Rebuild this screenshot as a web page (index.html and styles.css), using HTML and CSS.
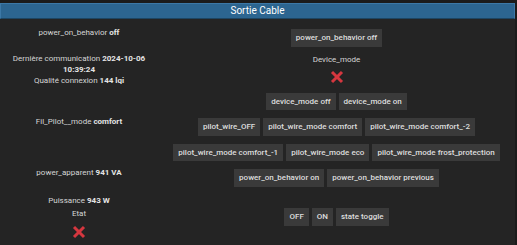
FILE: index.html
```html
<!DOCTYPE html>
<html lang="fr">
<head>
  <meta charset="UTF-8" />
  <title>Sortie Cable</title>
  <link rel="stylesheet" href="styles.css">
</head>
<body>
  <div class="panel">
    <div class="title">Sortie Cable</div>

    <div class="rows">
      <!-- power on behavior -->
      <div class="state offset">power_on_behavior <b>off</b></div>
      <div class="actions">
        <div class="btn-row">
          <button>power_on_behavior off</button>
        </div>
      </div>

      <!-- device mode -->
      <div class="state">
        <div>Dernière communication <b>2024-10-06</b></div>
        <div><b>10:39:24</b></div>
        <div>Qualité connexion <b>144 lqi</b></div>
      </div>
      <div class="actions device">
        <div class="label">Device_mode</div>
        <div class="icon-box">
          <svg class="cross" viewBox="0 0 14 14" aria-hidden="true">
            <line x1="2" y1="2" x2="12" y2="12" />
            <line x1="12" y1="2" x2="2" y2="12" />
          </svg>
        </div>
      </div>

      <!-- pilot wire -->
      <div class="state offset">Fil_Pilot__mode <b>comfort</b></div>
      <div class="actions">
        <div class="btn-row">
          <button>device_mode off</button>
          <button>device_mode on</button>
        </div>
        <div class="btn-row">
          <button>pilot_wire_OFF</button>
          <button>pilot_wire_mode comfort</button>
          <button>pilot_wire_mode comfort_-2</button>
        </div>
        <div class="btn-row">
          <button>pilot_wire_mode comfort_-1</button>
          <button>pilot_wire_mode eco</button>
          <button>pilot_wire_mode frost_protection</button>
        </div>
      </div>

      <!-- power -->
      <div class="state offset">power_apparent <b>941 VA</b></div>
      <div class="actions">
        <div class="btn-row">
          <button>power_on_behavior on</button>
          <button>power_on_behavior previous</button>
        </div>
      </div>

      <!-- state -->
      <div class="state last">
        <div>Puissance <b>943 W</b></div>
        <div class="sub">Etat</div>
        <div class="icon-box low">
          <svg class="cross" viewBox="0 0 14 14" aria-hidden="true">
            <line x1="2" y1="2" x2="12" y2="12" />
            <line x1="12" y1="2" x2="2" y2="12" />
          </svg>
        </div>
      </div>
      <div class="actions">
        <div class="btn-row">
          <button>OFF</button>
          <button>ON</button>
          <button>state toggle</button>
        </div>
      </div>
    </div>
  </div>
</body>
</html>
```

FILE: styles.css
```css
* {
  margin: 0;
  padding: 0;
  box-sizing: border-box;
}
body {
  background: #1b1b1b;
  font-family: Roboto, "Liberation Sans", sans-serif;
  font-size: 8px;
  line-height: 11px;
  color: #d6d6d6;
}
b {
  font-weight: 700;
  color: #e4e4e4;
}

.panel {
  width: 515px;
  height: 242px;
  margin-top: 3px;
  background: #242424;
}
.title {
  height: 16px;
  background: #2c6590;
  border: 1px solid #3c78a6;
  border-bottom-color: #1d4562;
  color: #fff;
  font-size: 10px;
  line-height: 14px;
  text-align: center;
}

/* state / actions table */
.rows {
  display: grid;
  grid-template-columns: 158px 1fr;
  padding-top: 6px;
}
.state {
  align-self: center;
  text-align: center;
  padding: 0 8px;
}
.state.offset {
  padding-bottom: 11px;
}
.state.last {
  padding-top: 4px;
}
.state .sub {
  margin-top: 2px;
}
.actions {
  align-self: center;
  display: flex;
  flex-direction: column;
  align-items: center;
}
.device {
  padding-top: 3px;
  text-align: center;
}
.btn-row {
  display: flex;
  justify-content: center;
}
button {
  font-family: inherit;
  font-size: 8px;
  font-weight: 500;
  line-height: 11.5px;
  color: #dedede;
  background: #3a3a3a;
  border: none;
  padding: 3px 5px;
  margin: 4px 1.5px;
}

.icon-box {
  height: 24px;
  display: flex;
  align-items: center;
  justify-content: center;
}
.icon-box.low {
  height: 25px;
  padding-top: 2px;
}
.cross {
  width: 14px;
  height: 14px;
  stroke: #d5373f;
  stroke-width: 3;
}
```
